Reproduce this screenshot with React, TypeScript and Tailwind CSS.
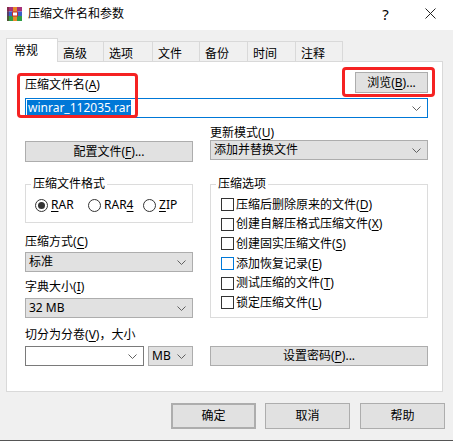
const font = "font-['Noto_Sans','Noto_Sans_CJK_SC',sans-serif]";

function Chevron() {
  return (
    <svg width="9" height="5" viewBox="0 0 9 5" className="shrink-0">
      <path d="M0.5 0.5 L4.5 4.5 L8.5 0.5" fill="none" stroke="#606060" strokeWidth="1" />
    </svg>
  );
}

function Key({ k }: { k: string }) {
  return (
    <>
      (<span className="underline underline-offset-2">{k}</span>)
    </>
  );
}

function Select({ text, className = "" }: { text: string; className?: string }) {
  return (
    <div className={`h-[20px] bg-[#e1e1e1] border border-[#adadad] flex items-center justify-between pl-[3px] pr-[6px] ${className}`}>
      <span>{text}</span>
      <Chevron />
    </div>
  );
}

function Button({ children, className = "" }: { children: React.ReactNode; className?: string }) {
  return (
    <div className={`bg-[#e1e1e1] border border-[#adadad] flex items-center justify-center ${className}`}>
      {children}
    </div>
  );
}

function Radio({ checked, children, className = "" }: { checked?: boolean; children: React.ReactNode; className?: string }) {
  return (
    <div className={`flex items-center gap-[3px] ${className}`}>
      <span className="w-[13px] h-[13px] rounded-full border border-[#333] flex items-center justify-center">
        {checked && <span className="w-[7px] h-[7px] rounded-full bg-[#333]" />}
      </span>
      <span>{children}</span>
    </div>
  );
}

function Check({ children, focus }: { children: React.ReactNode; focus?: boolean }) {
  return (
    <div className="h-[19.6px] flex items-center gap-[2px]">
      <span className={`w-[13px] h-[13px] border bg-white ${focus ? "border-[#0078d7]" : "border-[#333]"}`} />
      <span>{children}</span>
    </div>
  );
}

function Logo() {
  return (
    <svg width="15" height="14" viewBox="0 0 15 14">
      <rect x="0" y="0" width="15" height="4.5" fill="#a8307a" />
      <rect x="0" y="4.5" width="15" height="4.5" fill="#3a5fc8" />
      <rect x="0" y="9" width="15" height="5" fill="#2f9e45" />
      <rect x="0" y="0" width="2" height="14" fill="#6b2a2a" opacity="0.6" />
      <rect x="6" y="0" width="4" height="14" fill="#e88a2a" />
      <rect x="5.5" y="5" width="5" height="4" fill="#fff" stroke="#c0302a" strokeWidth="1" />
    </svg>
  );
}

const tabs = [
  { t: "高级", w: "w-[47px]" },
  { t: "选项", w: "w-[50px]" },
  { t: "文件", w: "w-[48px]" },
  { t: "备份", w: "w-[49px]" },
  { t: "时间", w: "w-[49px]" },
  { t: "注释", w: "w-[48px]" },
];

export default function App() {
  return (
    <div className={`${font} w-[453px] h-[441px] bg-[#f0f0f0] text-black text-[12px] leading-[14px] flex flex-col border-b border-[#555]`}>
      {/* title bar */}
      <div className="h-[30px] bg-white flex items-center shrink-0">
        <div className="ml-[7px] mt-[-3px]"><Logo /></div>
        <span className="ml-[6px] mt-[-3px] text-[12px]">压缩文件名和参数</span>
        <div className="ml-auto flex h-full">
          <div className="w-[45px] flex items-center justify-center text-[15px] mt-[-3px]">?</div>
          <div className="w-[45px] flex items-center justify-center mt-[-3px]">
            <svg width="11" height="11" viewBox="0 0 11 11">
              <path d="M0.5 0.5 L10.5 10.5 M10.5 0.5 L0.5 10.5" stroke="#222" strokeWidth="1" />
            </svg>
          </div>
        </div>
      </div>

      {/* tabs */}
      <div className="flex items-end px-[6px] mt-[8px] relative z-10">
        <div className="h-[24px] w-[52px] bg-white border border-b-0 border-[#d9d9d9] pl-[7px] pt-[5px]">常规</div>
        {tabs.map((tab) => (
          <div key={tab.t} className={`h-[21px] ${tab.w} -ml-px border border-b-0 border-[#d9d9d9] pl-[5px] pt-[5px]`}>
            {tab.t}
          </div>
        ))}
      </div>

      {/* panel */}
      <div className="relative mx-[6px] -mt-px w-[437px] h-[331px] bg-white border border-[#d9d9d9] pt-[10px] pl-[18px] pr-[14px] shrink-0">
        <div className="flex justify-between items-end h-[21px]">
          <span className="mb-[1px]">压缩文件名<Key k="A" /></span>
          <Button className="w-[73px] h-[21px]">浏览<Key k="B" />...</Button>
        </div>
        <div className="mt-[5px] h-[20px] border border-[#0078d7] flex items-center justify-between pl-[1px] pr-[6px]">
          <span className="bg-[#0078d7] text-white h-[16px] leading-[16px] px-[1px]">winrar_112035.rar</span>
          <Chevron />
        </div>

        <div className="mt-[8px] grid grid-cols-[168px_218px] gap-x-[17px]">
          <div className="pt-[15px]">
            <Button className="h-[21px]">配置文件<Key k="F" />...</Button>
          </div>
          <div>
            <div>更新模式<Key k="U" /></div>
            <Select text="添加并替换文件" />
          </div>

          <div className="mt-[15px] flex flex-col">
            <fieldset className="border border-[#dcdcdc] pb-[10px] min-w-0">
              <legend className="ml-[5px] px-[2px]">压缩文件格式</legend>
              <div className="mt-[7px] pl-[9px] flex items-center h-[14px]">
                <Radio checked className="w-[53px]"><span className="underline underline-offset-2">R</span>AR</Radio>
                <Radio className="w-[55px]">RAR<span className="underline underline-offset-2">4</span></Radio>
                <Radio><span className="underline underline-offset-2">Z</span>IP</Radio>
              </div>
            </fieldset>
            <div className="mt-[12px]">压缩方式<Key k="C" /></div>
            <Select text="标准" className="mt-[3px]" />
            <div className="mt-[8px]">字典大小<Key k="I" /></div>
            <Select text="32 MB" className="mt-[4px]" />
          </div>
          <div className="mt-[15px]">
            <fieldset className="border border-[#dcdcdc] pb-[4px] min-w-0 h-full">
              <legend className="ml-[5px] px-[2px]">压缩选项</legend>
              <div className="mt-[4px] pl-[10px]">
                <Check>压缩后删除原来的文件<Key k="D" /></Check>
                <Check>创建自解压格式压缩文件<Key k="X" /></Check>
                <Check>创建固实压缩文件<Key k="S" /></Check>
                <Check focus>添加恢复记录<Key k="E" /></Check>
                <Check>测试压缩的文件<Key k="T" /></Check>
                <Check>锁定压缩文件<Key k="L" /></Check>
              </div>
            </fieldset>
          </div>

          <div className="mt-[10px]">
            <div>切分为分卷<Key k="V" />，大小</div>
            <div className="mt-[4px] flex gap-[4px]">
              <div className="w-[119px] h-[20px] border border-[#7a7a7a] bg-white flex items-center justify-end pr-[6px]">
                <Chevron />
              </div>
              <Select text="MB" className="w-[45px]" />
            </div>
          </div>
          <div className="mt-[10px] pt-[18px]">
            <Button className="h-[20px]">设置密码<Key k="P" />...</Button>
          </div>
        </div>

        {/* red annotation boxes */}
        <div className="absolute left-[10px] top-[11px] w-[121px] h-[45px] border-[3px] border-[#f52222] rounded-[4px]" />
        <div className="absolute left-[335px] top-[5px] w-[93px] h-[30px] border-[3px] border-[#f52222] rounded-[4px]" />
      </div>

      {/* dialog buttons */}
      <div className="mt-[11px] flex justify-end gap-[9px] pr-[8px]">
        <Button className="w-[85px] h-[26px] border-2 border-[#0078d7]">确定</Button>
        <Button className="w-[85px] h-[26px]">取消</Button>
        <Button className="w-[85px] h-[26px] ml-px">帮助</Button>
      </div>
    </div>
  );
}
